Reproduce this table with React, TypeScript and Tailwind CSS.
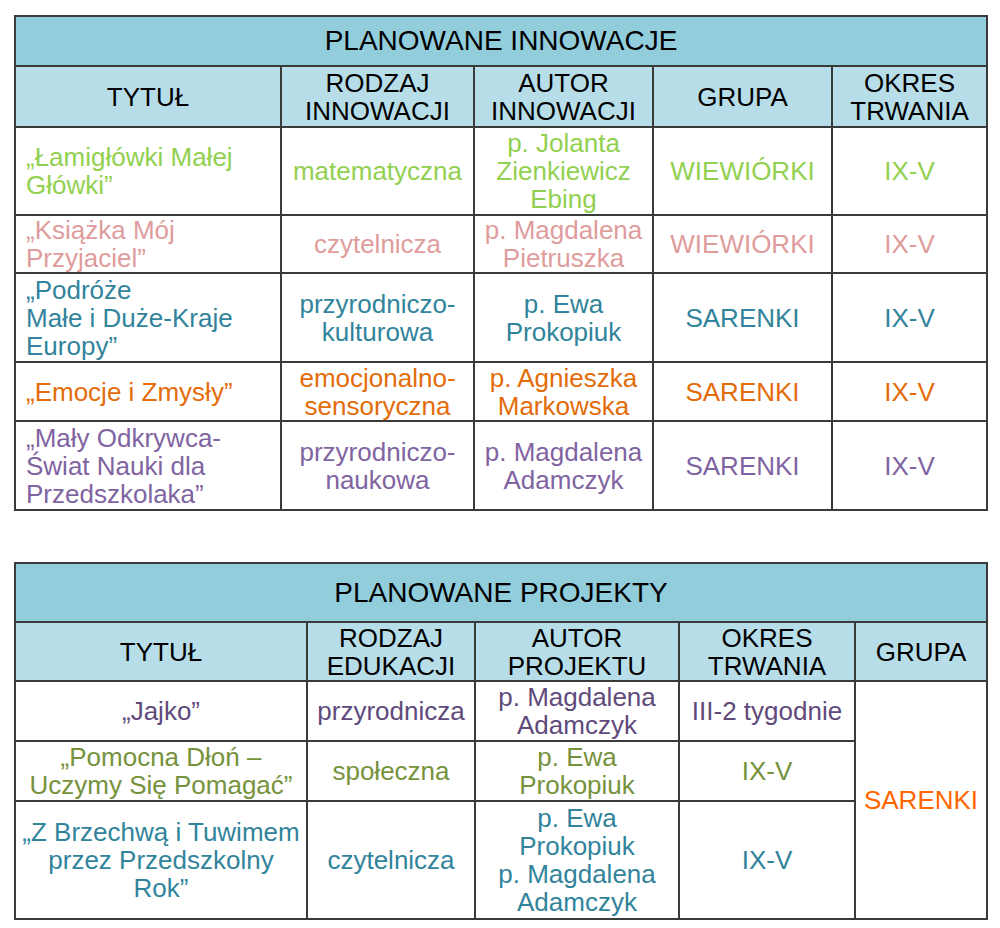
const FONT = "font-['Liberation_Sans',Arial,sans-serif]";

type Row = {
  color: string;
  height: string;
  cells: string[][];
};

const innowacje: Row[] = [
  {
    color: 'text-[#92d050]',
    height: 'h-[88px]',
    cells: [['„Łamigłówki Małej', 'Główki”'], ['matematyczna'], ['p. Jolanta', 'Zienkiewicz', 'Ebing'], ['WIEWIÓRKI'], ['IX-V']],
  },
  {
    color: 'text-[#df9c9c]',
    height: 'h-[58px]',
    cells: [['„Książka Mój', 'Przyjaciel”'], ['czytelnicza'], ['p. Magdalena', 'Pietruszka'], ['WIEWIÓRKI'], ['IX-V']],
  },
  {
    color: 'text-[#31849b]',
    height: 'h-[89px]',
    cells: [['„Podróże', 'Małe i Duże-Kraje', 'Europy”'], ['przyrodniczo-', 'kulturowa'], ['p. Ewa', 'Prokopiuk'], ['SARENKI'], ['IX-V']],
  },
  {
    color: 'text-[#e36c09]',
    height: 'h-[59px]',
    cells: [['„Emocje i Zmysły”'], ['emocjonalno-', 'sensoryczna'], ['p. Agnieszka', 'Markowska'], ['SARENKI'], ['IX-V']],
  },
  {
    color: 'text-[#8064a2]',
    height: 'h-[89px]',
    cells: [['„Mały Odkrywca-', 'Świat Nauki dla', 'Przedszkolaka”'], ['przyrodniczo-', 'naukowa'], ['p. Magdalena', 'Adamczyk'], ['SARENKI'], ['IX-V']],
  },
];

const projekty: Row[] = [
  {
    color: 'text-[#604a7b]',
    height: 'h-[60px]',
    cells: [['„Jajko”'], ['przyrodnicza'], ['p. Magdalena', 'Adamczyk'], ['III-2 tygodnie']],
  },
  {
    color: 'text-[#76923c]',
    height: 'h-[60px]',
    cells: [['„Pomocna Dłoń –', 'Uczymy Się Pomagać”'], ['społeczna'], ['p. Ewa', 'Prokopiuk'], ['IX-V']],
  },
  {
    color: 'text-[#31849b]',
    height: 'h-[118px]',
    cells: [['„Z Brzechwą i Tuwimem', 'przez Przedszkolny', 'Rok”'], ['czytelnicza'], ['p. Ewa', 'Prokopiuk', 'p. Magdalena', 'Adamczyk'], ['IX-V']],
  },
];

const cell = 'border-2 border-[#3a3a3a] p-0 align-middle';

function Lines({ lines }: { lines: string[] }) {
  return (
    <>
      {lines.map((line, i) => (
        <div key={i} className="whitespace-nowrap">
          {line}
        </div>
      ))}
    </>
  );
}

function HeaderCell({ lines }: { lines: string[] }) {
  return (
    <th className={`${cell} font-normal text-center text-black`}>
      <Lines lines={lines} />
    </th>
  );
}

export default function App() {
  return (
    <div className={`${FONT} bg-white w-[1000px] h-[928px] pt-[15px] text-[26px] leading-[28px]`}>
      <table className="ml-[14px] w-[972px] table-fixed border-collapse">
        <colgroup>
          <col className="w-[266px]" />
          <col className="w-[193px]" />
          <col className="w-[179px]" />
          <col className="w-[179px]" />
          <col className="w-[155px]" />
        </colgroup>
        <thead>
          <tr className="h-[50px] bg-[#92cddc]">
            <th colSpan={5} className={`${cell} font-normal text-center text-[28px] text-black`}>
              PLANOWANE INNOWACJE
            </th>
          </tr>
          <tr className="h-[61px] bg-[#b7dee8]">
            <HeaderCell lines={['TYTUŁ']} />
            <HeaderCell lines={['RODZAJ', 'INNOWACJI']} />
            <HeaderCell lines={['AUTOR', 'INNOWACJI']} />
            <HeaderCell lines={['GRUPA']} />
            <HeaderCell lines={['OKRES', 'TRWANIA']} />
          </tr>
        </thead>
        <tbody>
          {innowacje.map((row, r) => (
            <tr key={r} className={`${row.height} ${row.color}`}>
              {row.cells.map((lines, c) => (
                <td key={c} className={`${cell} ${c === 0 ? 'text-left pl-[10px]' : 'text-center'}`}>
                  <Lines lines={lines} />
                </td>
              ))}
            </tr>
          ))}
        </tbody>
      </table>

      <table className="ml-[14px] mt-[51px] w-[972px] table-fixed border-collapse">
        <colgroup>
          <col className="w-[292px]" />
          <col className="w-[168px]" />
          <col className="w-[204px]" />
          <col className="w-[176px]" />
          <col className="w-[132px]" />
        </colgroup>
        <thead>
          <tr className="h-[59px] bg-[#92cddc]">
            <th colSpan={5} className={`${cell} font-normal text-center text-[28px] text-black`}>
              PLANOWANE PROJEKTY
            </th>
          </tr>
          <tr className="h-[59px] bg-[#b7dee8]">
            <HeaderCell lines={['TYTUŁ']} />
            <HeaderCell lines={['RODZAJ', 'EDUKACJI']} />
            <HeaderCell lines={['AUTOR', 'PROJEKTU']} />
            <HeaderCell lines={['OKRES', 'TRWANIA']} />
            <HeaderCell lines={['GRUPA']} />
          </tr>
        </thead>
        <tbody>
          {projekty.map((row, r) => (
            <tr key={r} className={`${row.height} ${row.color}`}>
              {row.cells.map((lines, c) => (
                <td key={c} className={`${cell} text-center`}>
                  <Lines lines={lines} />
                </td>
              ))}
              {r === 0 && (
                <td rowSpan={3} className={`${cell} text-center text-[#ff6600]`}>
                  SARENKI
                </td>
              )}
            </tr>
          ))}
        </tbody>
      </table>
    </div>
  );
}
